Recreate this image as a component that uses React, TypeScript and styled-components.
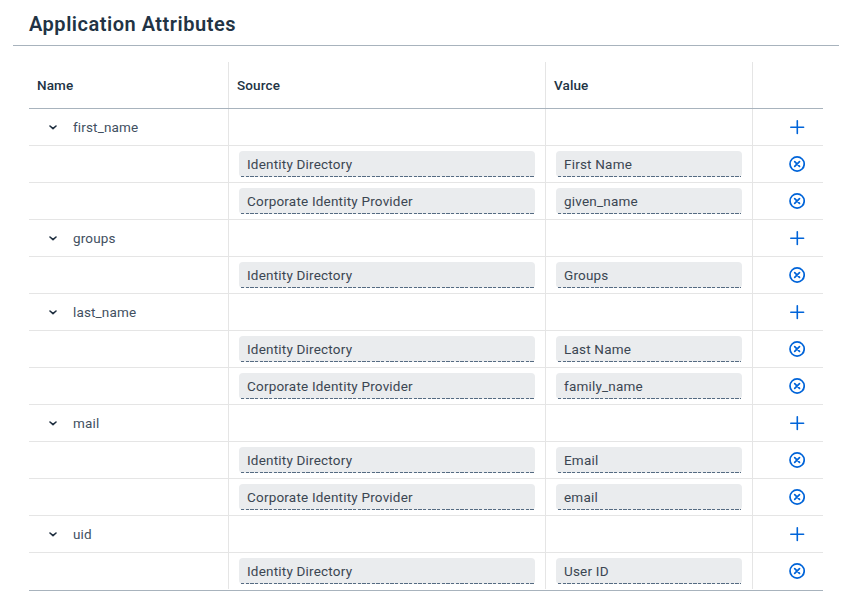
import React from "react";
import styled, { createGlobalStyle } from "styled-components";

const GlobalStyle = createGlobalStyle`
  * { box-sizing: border-box; }
  body {
    margin: 0;
    background: #fff;
    color: #223344;
    font-family: Roboto, "Noto Sans", sans-serif;
    font-size: 14px;
  }
`;

const Page = styled.main`
  height: 599px;
  overflow: hidden;
`;

const Header = styled.header`
  height: 46px;
  margin: 0 7px 16px 13px;
  padding: 12px 16px 0;
  border-bottom: 1px solid #a8b3bd;
`;

const Title = styled.h1`
  margin: 0;
  font-size: 20px;
  line-height: 24px;
  font-weight: 600;
  letter-spacing: 0.51px;
  white-space: nowrap;
`;

const Table = styled.div`
  width: 794px;
  margin-left: 29px;
  border-bottom: 1px solid #a8b3bd;
`;

const Row = styled.div`
  display: grid;
  grid-template-columns: 200px 317px 207px 70px;
  height: 37px;
  border-bottom: 1px solid #e5e5e5;
  &:last-child { border-bottom-color: transparent; }
`;

const HeadRow = styled(Row)`
  height: 47px;
  border-bottom-color: #a8b3bd;
`;

const Cell = styled.div`
  display: flex;
  align-items: center;
  border-right: 1px solid #e5e5e5;
  min-width: 0;
  &:last-child { border-right: 0; }
`;

const HeadCell = styled(Cell)`
  padding-left: 8px;
  font-size: 13.5px;
  line-height: 16px;
  font-weight: 500;
  letter-spacing: 0.12px;
`;

const NameCell = styled(Cell)`
  padding-left: 20px;
  gap: 16px;
  font-size: 13.5px;
  line-height: 16px;
  letter-spacing: 0.15px;
  color: #42505f;
`;

const FieldCell = styled(Cell)`
  padding: 0 10px;
`;

const ActionCell = styled(Cell)`
  padding-left: 36px;
`;

const Field = styled.div`
  position: relative;
  flex: 1;
  height: 26px;
  padding-left: 8px;
  border-radius: 4px;
  font-size: 13.5px;
  line-height: 27px;
  letter-spacing: 0.2px;
  color: #3b4652;
  white-space: nowrap;
  background: #eaecee;
  &::after {
    content: "";
    position: absolute;
    left: 2px;
    right: 1px;
    bottom: 0;
    height: 1px;
    background: repeating-linear-gradient(90deg, #556b82 0 3.3px, transparent 3.3px 4.667px);
  }
`;

const Icon = styled.svg`
  display: block;
  flex: none;
  fill: none;
  stroke: #0064d9;
`;

const Arrow = styled(Icon)`
  stroke: #1d2d3e;
`;

const Chevron = () => (
  <Arrow width="8" height="8" viewBox="0 0 8 8" strokeWidth="1.6" strokeLinecap="round" strokeLinejoin="round">
    <path d="M1 3L4 5.6L7 3" />
  </Arrow>
);

const Plus = () => (
  <Icon width="16" height="16" viewBox="0 0 16 16" strokeWidth="1.6" strokeLinecap="round">
    <path d="M8.3 1.8V14.4M1.8 8.2H14.6" />
  </Icon>
);

const Remove = () => (
  <Icon width="16" height="16" viewBox="0 0 16 16" strokeWidth="1.7" strokeLinecap="round">
    <circle cx="8.1" cy="8" r="7.1" />
    <path d="M5.7 5.6L10.5 10.4M10.5 5.6L5.7 10.4" />
  </Icon>
);

const directory = "Identity Directory";
const corporate = "Corporate Identity Provider";

const attributes = [
  { name: "first_name", sources: [[directory, "First Name"], [corporate, "given_name"]] },
  { name: "groups", sources: [[directory, "Groups"]] },
  { name: "last_name", sources: [[directory, "Last Name"], [corporate, "family_name"]] },
  { name: "mail", sources: [[directory, "Email"], [corporate, "email"]] },
  { name: "uid", sources: [[directory, "User ID"]] },
];

export default function App() {
  return (
    <Page>
      <GlobalStyle />
      <Header>
        <Title>Application Attributes</Title>
      </Header>
      <Table>
        <HeadRow>
          <HeadCell>Name</HeadCell>
          <HeadCell>Source</HeadCell>
          <HeadCell>Value</HeadCell>
          <HeadCell />
        </HeadRow>
        {attributes.map((attribute) => (
          <React.Fragment key={attribute.name}>
            <Row>
              <NameCell>
                <Chevron />
                {attribute.name}
              </NameCell>
              <Cell />
              <Cell />
              <ActionCell><Plus /></ActionCell>
            </Row>
            {attribute.sources.map(([source, value]) => (
              <Row key={source}>
                <Cell />
                <FieldCell><Field>{source}</Field></FieldCell>
                <FieldCell><Field>{value}</Field></FieldCell>
                <ActionCell><Remove /></ActionCell>
              </Row>
            ))}
          </React.Fragment>
        ))}
      </Table>
    </Page>
  );
}
